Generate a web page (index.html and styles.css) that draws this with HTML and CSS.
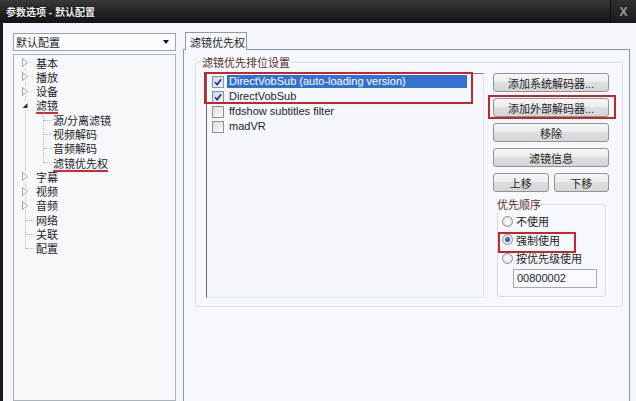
FILE: index.html
```html
<!DOCTYPE html>
<html lang="zh-CN">
<head>
    <meta charset="UTF-8">
    <title>参数选项 - 默认配置</title>
    <link rel="stylesheet" href="styles.css">
</head>
<body>
    <div class="titlebar">
        <span class="title">参数选项 - 默认配置</span>
        <span class="close">X</span>
    </div>
    <div class="frame">
        <div class="sidebar">
            <div class="combo"><span>默认配置</span><span class="combo-arrow"></span></div>
            <div class="tree">
                <div class="level0">
                    <div class="node"><svg class="twist" viewBox="0 0 6 9"><path d="M0.5 0.5 L5.5 4.5 L0.5 8.5 Z" fill="#fff" stroke="#a0a0a0"/></svg>基本</div>
                    <div class="node"><svg class="twist" viewBox="0 0 6 9"><path d="M0.5 0.5 L5.5 4.5 L0.5 8.5 Z" fill="#fff" stroke="#a0a0a0"/></svg>播放</div>
                    <div class="node"><svg class="twist" viewBox="0 0 6 9"><path d="M0.5 0.5 L5.5 4.5 L0.5 8.5 Z" fill="#fff" stroke="#a0a0a0"/></svg>设备</div>
                    <div class="node"><svg class="twist" viewBox="0 0 6 9"><path d="M5.5 2 L5.5 7 L0.5 7 Z" fill="#333"/></svg><span class="underline">滤镜</span></div>
                    <div class="children">
                        <div class="node child">源/分离滤镜</div>
                        <div class="node child">视频解码</div>
                        <div class="node child">音频解码</div>
                        <div class="node child"><span class="underline">滤镜优先权</span></div>
                    </div>
                    <div class="node"><svg class="twist" viewBox="0 0 6 9"><path d="M0.5 0.5 L5.5 4.5 L0.5 8.5 Z" fill="#fff" stroke="#a0a0a0"/></svg>字幕</div>
                    <div class="node"><svg class="twist" viewBox="0 0 6 9"><path d="M0.5 0.5 L5.5 4.5 L0.5 8.5 Z" fill="#fff" stroke="#a0a0a0"/></svg>视频</div>
                    <div class="node"><svg class="twist" viewBox="0 0 6 9"><path d="M0.5 0.5 L5.5 4.5 L0.5 8.5 Z" fill="#fff" stroke="#a0a0a0"/></svg>音频</div>
                    <div class="node leaf"><span class="twist"></span>网络</div>
                    <div class="node leaf"><span class="twist"></span>关联</div>
                    <div class="node leaf"><span class="twist"></span>配置</div>
                </div>
            </div>
        </div>

        <div class="main">
            <div class="tabs">
                <div class="tab">滤镜优先权</div>
            </div>
            <div class="tab-panel">
                <fieldset class="group">
                    <legend>滤镜优先排位设置</legend>
                    <div class="group-body">
                        <div class="listbox">
                            <div class="list-mark">
                                <div class="item">
                                    <span class="check on"><svg viewBox="0 0 10 10"><path d="M2 5.2 L4.2 7.6 L8.2 2.2" fill="none" stroke="#1d3a8a" stroke-width="1.7"/></svg></span>
                                    <span class="item-label selected">DirectVobSub (auto-loading version)</span>
                                </div>
                                <div class="item">
                                    <span class="check on"><svg viewBox="0 0 10 10"><path d="M2 5.2 L4.2 7.6 L8.2 2.2" fill="none" stroke="#1d3a8a" stroke-width="1.7"/></svg></span>
                                    <span class="item-label">DirectVobSub</span>
                                </div>
                            </div>
                            <div class="item">
                                <span class="check"></span>
                                <span class="item-label">ffdshow subtitles filter</span>
                            </div>
                            <div class="item">
                                <span class="check"></span>
                                <span class="item-label">madVR</span>
                            </div>
                        </div>

                        <div class="actions">
                            <button class="btn">添加系统解码器...</button>
                            <button class="btn btn-mark">添加外部解码器...</button>
                            <button class="btn">移除</button>
                            <button class="btn">滤镜信息</button>
                            <div class="btn-row">
                                <button class="btn">上移</button>
                                <button class="btn">下移</button>
                            </div>
                            <fieldset class="prio">
                                <legend>优先顺序</legend>
                                <div class="radio-row"><span class="radio"></span>不使用</div>
                                <div class="radio-row radio-mark"><span class="radio on"></span>强制使用</div>
                                <div class="radio-row"><span class="radio"></span>按优先级使用</div>
                                <input class="prio-input" type="text" value="00800002" readonly>
                            </fieldset>
                        </div>
                    </div>
                </fieldset>
            </div>
        </div>
    </div>
</body>
</html>
```

FILE: styles.css
```css
* {
    box-sizing: border-box;
}

body {
    margin: 0;
    width: 636px;
    height: 401px;
    overflow: hidden;
    font-family: "Liberation Sans", "Noto Sans CJK SC", sans-serif;
    font-size: 11px;
    color: #1e1e1e;
    background: #f3f6fa;
}

/* title bar */
.titlebar {
    height: 23px;
    display: flex;
    align-items: center;
    background: linear-gradient(#3a3a3a, #222 55%, #141414);
    color: #f2f2f2;
}

.title {
    flex: 1;
    padding-left: 6px;
    font-size: 10px;
    font-weight: bold;
    text-shadow: 0 0 2px #000;
}

.close {
    width: 26px;
    height: 23px;
    display: flex;
    align-items: center;
    justify-content: center;
    border-left: 1px solid #0d0d0d;
    background: linear-gradient(#303030, #1a1a1a);
    color: #9c9c9c;
    font-weight: bold;
    font-size: 12px;
}

.frame {
    display: flex;
    height: 378px;
    overflow: hidden;
    border-left: 3px solid #1b1b1b;
    padding: 10px 0 0 10px;
}

/* left side */
.sidebar {
    width: 163px;
    display: flex;
    flex-direction: column;
}

.combo {
    height: 19px;
    display: flex;
    align-items: center;
    justify-content: space-between;
    padding: 0 6px 0 2px;
    border: 1px solid #9aa2ab;
    background: #fbfcfd;
}

.combo-arrow {
    border-top: 4px solid #111;
    border-left: 3.5px solid transparent;
    border-right: 3.5px solid transparent;
}

.tree {
    margin-top: 3px;
    height: 360px;
    border: 1px solid #aab3bc;
    background: #f6f8fc;
    font-size: 11px;
}

.level0 {
    position: relative;
}

.level0::before {
    content: "";
    position: absolute;
    left: 11px;
    top: 7px;
    bottom: 7px;
    border-left: 1px dotted #b5b5b5;
}

.node {
    position: relative;
    display: flex;
    align-items: center;
    height: 14.3px;
    padding-left: 8px;
    white-space: nowrap;
}

.twist {
    position: relative;
    z-index: 1;
    width: 6px;
    height: 9px;
    margin-right: 8px;
    background: #f6f8fc;
}

.leaf .twist {
    background: none;
}

.leaf::before {
    content: "";
    position: absolute;
    left: 12px;
    top: 7px;
    width: 8px;
    border-top: 1px dotted #b5b5b5;
}

.children {
    position: relative;
}

.children::before {
    content: "";
    position: absolute;
    left: 29px;
    top: 0;
    bottom: 7px;
    border-left: 1px dotted #b5b5b5;
}

.child {
    padding-left: 39px;
}

.child::before {
    content: "";
    position: absolute;
    left: 30px;
    top: 7px;
    width: 8px;
    border-top: 1px dotted #b5b5b5;
}

.underline {
    text-decoration: underline 2px #d1283a;
    text-underline-offset: 2px;
}

/* right side */
.main {
    flex: 1;
    display: flex;
    flex-direction: column;
    margin: -1px 6px 0 7px;
}

.tabs {
    display: flex;
    padding-left: 2px;
}

.tab {
    width: 62px;
    height: 18px;
    margin-bottom: -1px;
    padding: 1px 0 0 4px;
    border: 1px solid #8d99a5;
    border-bottom: none;
    background: #f6f8fc;
    position: relative;
    z-index: 1;
}

.tab-panel {
    flex: 1;
    padding: 4px 6px 0 11px;
    border: 1px solid #8d99a5;
    border-bottom: none;
    background: #f5f8fc;
}

.group,
.prio {
    margin: 0;
    min-inline-size: 0;
    border: 1px solid #d3d9e0;
    border-radius: 3px;
    box-shadow: inset 1px 1px 0 #fff, 1px 1px 0 #fff;
}

.group {
    padding: 3px 13px 8px 10px;
}

.group legend {
    margin-left: -5px;
    padding: 0 1px;
    color: #5a2e2e;
}

.group-body {
    display: flex;
    gap: 9px;
}

.listbox {
    width: 278px;
    height: 225px;
    border: 1px solid #e3e8ee;
    border-left-color: #5f6468;
    border-top-color: #7b8085;
    background: #f4f7fc;
}

.list-mark {
    position: relative;
}

.list-mark::after {
    content: "";
    position: absolute;
    left: -3px;
    top: -2px;
    width: 265px;
    bottom: 0;
    border: 2px solid #c4262e;
}

.item {
    display: flex;
    align-items: center;
    height: 15px;
    padding-left: 5px;
}

.check {
    width: 12px;
    height: 12px;
    margin-right: 3px;
    border: 1px solid #8e8f8f;
    background: linear-gradient(135deg, #dcdcdc, #fbfbfb);
}

.check.on {
    background: linear-gradient(135deg, #c9d8ec, #f4f8fd);
}

.check svg {
    display: block;
    width: 10px;
    height: 10px;
}

.item-label {
    width: 240px;
    height: 13px;
    line-height: 13px;
    padding-left: 2px;
    white-space: nowrap;
}

.item-label.selected {
    background: #3271d2;
    color: #fff;
}

.actions {
    width: 116px;
    display: flex;
    flex-direction: column;
    gap: 6px;
}

.btn {
    height: 19px;
    padding: 0;
    border: 1px solid #8f9296;
    border-radius: 3px;
    background: linear-gradient(#f7f7f7, #ededed 45%, #dedede 50%, #d6d6d6);
    font: 11px "Liberation Sans", "Noto Sans CJK SC", sans-serif;
    color: #1e1e1e;
}

.btn-mark {
    position: relative;
}

.btn-mark::after {
    content: "";
    position: absolute;
    left: -6px;
    right: -8px;
    top: -4px;
    bottom: -3px;
    border: 2px solid #c4262e;
}

.btn-row {
    display: flex;
    gap: 5px;
}

.btn-row .btn {
    flex: 1;
}

.prio {
    margin: -2px 3px 0 4px;
    padding: 0 6px 8px 4px;
}

.prio legend {
    padding: 0;
    color: #5a2e2e;
}

.radio-row {
    position: relative;
    display: flex;
    align-items: center;
    gap: 3px;
    height: 18.5px;
}

.radio {
    width: 11px;
    height: 11px;
    border-radius: 50%;
    border: 1px solid #8e8f8f;
    background: radial-gradient(#fdfdfd, #d9d9d9);
    display: flex;
    align-items: center;
    justify-content: center;
}

.radio.on::after {
    content: "";
    width: 5px;
    height: 5px;
    border-radius: 50%;
    background: radial-gradient(circle at 35% 35%, #5b86d6, #0f2d78);
}

.radio-mark::after {
    content: "";
    position: absolute;
    left: -4px;
    top: 1px;
    width: 74px;
    height: 17px;
    border: 2px solid #c4262e;
}

.prio-input {
    display: block;
    width: 84px;
    height: 19px;
    margin: 1px 0 0 11px;
    padding: 0 3px;
    border: 1px solid #a3a9b3;
    background: #f8fafd;
    font: 11px "Liberation Sans", sans-serif;
    color: #1e1e1e;
}
```
